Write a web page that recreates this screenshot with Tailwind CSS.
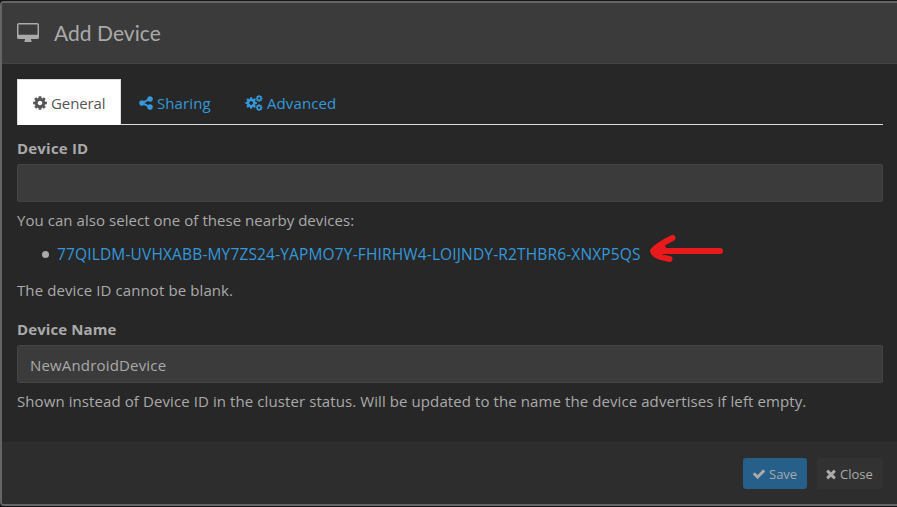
<!DOCTYPE html>
<html lang="en">
<head>
<meta charset="utf-8">
<title>Add Device</title>
<script src="https://cdn.jsdelivr.net/npm/@tailwindcss/browser@4"></script>
</head>
<body class="h-[507px] w-[897px] overflow-hidden bg-[#141316] pt-px font-['Open_Sans','Noto_Sans',sans-serif] text-[15px] leading-[22px] text-[#aaaaaa]">
<svg class="hidden">
  <symbol id="cog" viewBox="0 0 1792 1792"><path d="M1152 896q0-106-75-181t-181-75-181 75-75 181 75 181 181 75 181-75 75-181zm512-109v222q0 12-8 23t-20 13l-185 28q-19 54-39 91 35 50 107 138 10 12 10 25t-9 23q-27 37-99 108t-94 71q-12 0-26-9l-138-108q-44 23-91 38-16 136-29 186-7 28-36 28h-222q-14 0-24.5-8.5t-11.5-21.5l-28-184q-49-16-90-37l-141 107q-10 9-25 9-14 0-25-11-126-114-165-168-7-10-7-23 0-12 8-23 15-21 51-66.5t54-70.5q-27-50-41-99l-183-27q-13-2-21-12.5t-8-23.5v-222q0-12 8-23t19-13l186-28q14-46 39-92-40-57-107-138-10-12-10-24 0-10 9-23 26-36 98.500-107.500t94.500-71.500q13 0 26 10l138 107q44-23 91-38 16-136 29-186 7-28 36-28h222q14 0 24.500 8.500t11.500 21.500l28 184q49 16 90 37l142-107q9-9 24-9 13 0 25 10 129 119 165 170 7 8 7 22 0 12-8 23-15 21-51 66.500t-54 70.500q26 50 41 98l183 28q13 2 21 12.500t8 23.500z"/></symbol>
</svg>
<div class="flex h-[505px] w-[905px] flex-col overflow-hidden rounded-[4px] border-2 border-[#666566] bg-[#272727]">
  <header class="flex h-[61px] shrink-0 items-center border-b border-[#444444] bg-[#3b3b3b] pl-[15px]">
    <svg class="mb-[2px] h-[19px] w-[22px] shrink-0" viewBox="0 0 1920 1664" preserveAspectRatio="none" fill="currentColor"><path d="M1792 992v-832q0-13-9.500-22.500t-22.500-9.500h-1600q-13 0-22.500 9.500t-9.500 22.500v832q0 13 9.500 22.500t22.500 9.500h1600q13 0 22.500-9.500t9.500-22.500zm128-832v1088q0 66-47 113t-113 47h-544q0 37 16 77.500t32 71 16 43.500q0 26-19 45t-45 19h-512q-26 0-45-19t-19-45q0-14 16-44t32-70 16-78h-544q-66 0-113-47t-47-113v-1088q0-66 47-113t113-47h1600q66 0 113 47t47 113z"/></svg>
    <h4 class="-mt-px ml-[15px] font-[Lato,sans-serif] text-[21px] leading-[24px] tracking-[0.05px]">Add Device</h4>
  </header>
  <main class="flex h-[378px] w-[896px] shrink-0 flex-col pt-[15px] pr-[15px] pl-[15px]">
    <nav class="flex h-[46px] shrink-0 border-b border-[#dddddd] text-[#3498db]">
      <a class="flex h-[46px] w-[104px] shrink-0 items-center border border-b-0 border-[#dddddd] bg-white pt-px pl-[14px] text-[#555555]">
        <svg class="h-4 w-4 shrink-0" fill="currentColor"><use href="#cog"/></svg><span class="ml-[3px] tracking-[-0.1px]">General</span>
      </a>
      <a class="flex w-[106px] shrink-0 items-center pt-[3px] pl-[17px]">
        <svg class="h-4 w-4 shrink-0" viewBox="0 0 1792 1792" fill="currentColor"><path d="M1344 1024q133 0 226.500 93.500t93.500 226.500-93.500 226.500-226.500 93.500-226.500-93.500-93.500-226.500q0-12 2-34l-360-180q-92 86-218 86-133 0-226.500-93.500t-93.500-226.500 93.500-226.500 226.500-93.500q126 0 218 86l360-180q-2-22-2-34 0-133 93.500-226.500t226.500-93.500 226.500 93.500 93.500 226.500-93.500 226.500-226.500 93.500q-126 0-218-86l-360 180q2 22 2 34t-2 34l360 180q92-86 218-86z"/></svg><span class="ml-[3px] tracking-[0.1px]">Sharing</span>
      </a>
      <a class="flex shrink-0 items-center pt-[3px] pl-[18px]">
        <svg class="h-4 w-[18px] shrink-0" viewBox="0 0 1920 1792" fill="currentColor"><use href="#cog" x="-107" y="149" width="1494" height="1494"/><use href="#cog" x="1088" y="-64" width="896" height="896"/><use href="#cog" x="1088" y="960" width="896" height="896"/></svg><span class="ml-[4px] tracking-[0.1px]">Advanced</span>
      </a>
    </nav>
    <label class="mt-[12px] font-bold tracking-[0.2px]">Device ID</label>
    <div class="mt-[5px] h-[38px] shrink-0 rounded-[2px] border border-[#444444] bg-[#3b3b3b]"></div>
    <p class="mt-[7px] tracking-[0.05px]">You can also select one of these nearby devices:</p>
    <div class="mt-[12px] flex items-center pl-[25px]">
      <span class="size-[7px] shrink-0 rounded-full bg-[#aaaaaa]"></span>
      <a class="ml-[8px] w-[583px] whitespace-nowrap text-[15.5px] tracking-[0.15px] text-[#3498db]">77QILDM-UVHXABB-MY7ZS24-YAPMO7Y-FHIRHW4-LOIJNDY-R2THBR6-XNXP5QS</a>
      <svg class="-my-[6px] ml-[8px] h-[34px] w-[76px] shrink-0 -translate-y-[7px]" viewBox="0 0 76 34" fill="none" stroke="#e81a1c" stroke-width="6" stroke-linecap="round" stroke-linejoin="round"><path d="M24.500 8Q10 15 5 21Q6 26.500 21.500 29M9 21H72M6 22L15 18"/></svg>
    </div>
    <p class="mt-[14px] tracking-[0.1px]">The device ID cannot be blank.</p>
    <label class="mt-[17px] font-bold tracking-[0.1px]">Device Name</label>
    <div class="mt-[5px] flex h-[38px] shrink-0 items-center rounded-[2px] border border-[#444444] bg-[#3b3b3b] pt-[2px] pl-[12px] tracking-[0.17px]">NewAndroidDevice</div>
    <p class="mt-[7px] whitespace-nowrap tracking-[0.09px]">Shown instead of Device ID in the cluster status. Will be updated to the name the device advertises if left empty.</p>
  </main>
  <footer class="flex w-[896px] grow items-start justify-end gap-[10px] border-t border-[#303030] bg-[#2d2d2d] pt-[15px] pr-[15px] text-[13px]">
    <button class="flex h-[31px] w-[64px] items-center rounded-[3px] bg-[#265f89] pt-px pl-[9px]"><svg class="h-[14px] w-[14px] shrink-0" viewBox="0 0 1792 1792" fill="currentColor"><path d="M1671 566q0 40-28 68l-724 724-136 136q-28 28-68 28t-68-28l-136-136-362-362q-28-28-28-68t28-68l136-136q28-28 68-28t68 28l294 295 656-657q28-28 68-28t68 28l136 136q28 28 28 68z"/></svg><span class="ml-[3px]">Save</span></button>
    <button class="flex h-[31px] w-[66px] items-center rounded-[3px] bg-[#323232] pt-px pl-[7px]"><svg class="h-[14px] w-[14px] shrink-0" viewBox="0 0 1792 1792" fill="currentColor"><path d="M1490 1322q0 40-28 68l-136 136q-28 28-68 28t-68-28l-294-294-294 294q-28 28-68 28t-68-28l-136-136q-28-28-28-68t28-68l294-294-294-294q-28-28-28-68t28-68l136-136q28-28 68-28t68 28l294 294 294-294q28-28 68-28t68 28l136 136q28 28 28 68t-28 68l-294 294 294 294q28 28 28 68z"/></svg><span class="ml-[2px]">Close</span></button>
  </footer>
</div>
</body>
</html>
